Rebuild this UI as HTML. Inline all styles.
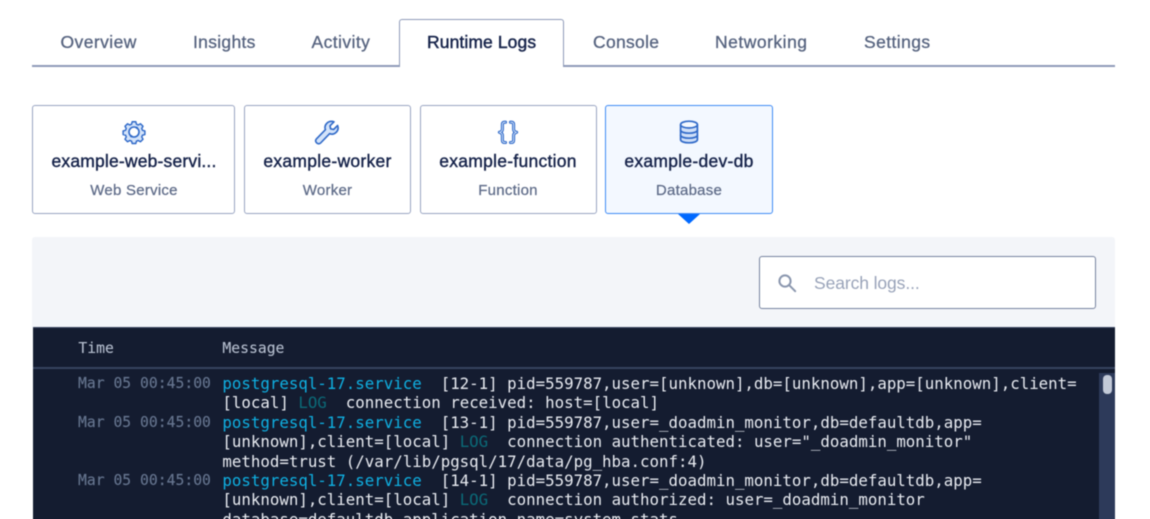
<!DOCTYPE html>
<html lang="en">
<head>
<meta charset="utf-8">
<title>Runtime Logs</title>
<style>
html,body{margin:0;padding:0;background:#fff;width:1150px;height:519px;overflow:hidden;}
body{position:relative;font-family:"Liberation Sans",sans-serif;}
#c{position:absolute;left:0;top:0;width:1150px;height:519px;overflow:hidden;contain:paint;}
#w{position:absolute;left:0;top:0;width:1150px;height:540px;overflow:hidden;filter:blur(.45px);}
.a{position:absolute;white-space:pre;}
.tab{top:31px;font-size:17.5px;line-height:22px;color:#56637f;letter-spacing:.42px;-webkit-text-stroke:.3px #56637f;}
.card{position:absolute;top:105px;height:107px;border:1.4px solid #99a5c2;border-radius:3px;background:#fff;box-sizing:content-box;}
.nm{top:150px;font-size:17.5px;line-height:22px;color:#16234a;letter-spacing:.27px;-webkit-text-stroke:.4px #16234a;transform:translateX(-50%);}
.ty{top:182px;font-size:15px;line-height:18px;color:#5f6c89;letter-spacing:.25px;-webkit-text-stroke:.25px #5f6c89;transform:translateX(-50%);}
.m{font-family:"DejaVu Sans Mono","Liberation Mono",monospace;}
.t{font-size:14.73px;line-height:19px;color:#66758f;left:78px;-webkit-text-stroke:.15px #66758f;}
.l{font-size:15.78px;line-height:19px;color:#e8ebf1;left:222.4px;}
.s{color:#0fb0e2;}
.g{color:#0b6a78;}
svg{position:absolute;overflow:visible;}
</style>
</head>
<body>
<div id="c">
<div id="w">
  <div class="a" style="left:32px;top:65px;width:1083px;height:1.6px;background:#8e9ab8;"></div>
  <div class="a" style="left:399px;top:19px;width:163px;height:47px;border:1.5px solid #8e9ab8;border-bottom:none;border-radius:3px 3px 0 0;background:#fff;"></div>

  <div class="a tab" style="left:60.5px;">Overview</div>
  <div class="a tab" style="left:193px;letter-spacing:.3px;">Insights</div>
  <div class="a tab" style="left:311.5px;">Activity</div>
  <div class="a tab" style="left:427px;color:#16234a;letter-spacing:.1px;-webkit-text-stroke:.45px #16234a;">Runtime Logs</div>
  <div class="a tab" style="left:593px;letter-spacing:.3px;">Console</div>
  <div class="a tab" style="left:715px;letter-spacing:.5px;">Networking</div>
  <div class="a tab" style="left:864px;">Settings</div>

  <div class="card" style="left:32px;width:201px;"></div>
  <div class="card" style="left:244px;width:165px;"></div>
  <div class="card" style="left:420px;width:174.5px;"></div>
  <div class="card" style="left:605px;width:166px;border-color:#3f8bf5;background:#f3f8ff;border-width:1.6px;"></div>
  <div class="a" style="left:678px;top:214px;width:0;height:0;border-left:11px solid transparent;border-right:11px solid transparent;border-top:10.5px solid #0069ff;"></div>

  <!-- gear -->
  <svg style="left:122px;top:120px;" width="24" height="24" viewBox="0 0 24 24" fill="#d3e3fa" stroke="#2f69c8" stroke-width="1.6" stroke-linejoin="round">
    <path d="M10 1.3h4l.7 2.7 2 .9 2.5-1.4 2.8 2.8-1.4 2.5.8 2 2.7.7v4l-2.7.7-.8 2 1.4 2.5-2.8 2.8-2.5-1.4-2 .8-.7 2.6h-4l-.7-2.6-2-.8-2.5 1.4-2.8-2.8 1.4-2.5-.8-2-2.7-.7v-4l2.7-.7.8-2-1.4-2.5 2.8-2.8 2.5 1.4 2-.9z" transform="translate(12 12) scale(.9) translate(-12 -12.7)"/>
    <circle cx="12" cy="12" r="5" fill="#fff"/>
    <circle cx="14.8" cy="7.8" r="1.2" fill="#2f69c8" stroke="none"/>
    <circle cx="9.2" cy="16.2" r="1.2" fill="#2f69c8" stroke="none"/>
  </svg>
  <!-- wrench -->
  <svg style="left:315px;top:120px;" width="25" height="25" viewBox="0 0 25 25" fill="#d3e3fa" stroke="#2f69c8" stroke-width="1.6" stroke-linejoin="round">
    <path d="M16.5 1.3c1 0 1.8.2 2.5.5l-4 4 .6 3 3 .7 4-4c.9 2.3.4 5-1.4 6.8-1.8 1.8-4.3 2.2-6.5 1.3L5.6 23a2.6 2.6 0 0 1-3.8 0l-.4-.4a2.6 2.6 0 0 1 0-3.7l9-9.2c-.8-2.2-.4-4.6 1.4-6.4 1.2-1.3 2.9-2 4.7-2z"/>
  </svg>
  <!-- braces -->
  <svg style="left:496px;top:120px;" width="24" height="25" viewBox="0 0 24 25" fill="none" stroke-linecap="round" stroke-linejoin="round">
    <path d="M9.5 2.2H8.6C7 2.2 6.4 3.2 6.4 4.6v4.6c0 1.5-.9 2.6-3 3.1 2.1.6 3 1.7 3 3.2v4.6c0 1.4.6 2.4 2.2 2.4h.9" stroke="#2f69c8" stroke-width="3.1"/>
    <path d="M9.5 2.2H8.6C7 2.2 6.4 3.2 6.4 4.6v4.6c0 1.5-.9 2.6-3 3.1 2.1.6 3 1.7 3 3.2v4.6c0 1.4.6 2.4 2.2 2.4h.9" stroke="#d3e3fa" stroke-width="1"/>
    <path d="M14.5 2.2h.9c1.6 0 2.2 1 2.2 2.4v4.6c0 1.5.9 2.6 3 3.1-2.1.6-3 1.7-3 3.2v4.6c0 1.4-.6 2.4-2.2 2.4h-.9" stroke="#2f69c8" stroke-width="3.1"/>
    <path d="M14.5 2.2h.9c1.6 0 2.2 1 2.2 2.4v4.6c0 1.5.9 2.6 3 3.1-2.1.6-3 1.7-3 3.2v4.6c0 1.4-.6 2.4-2.2 2.4h-.9" stroke="#d3e3fa" stroke-width="1"/>
  </svg>
  <!-- database -->
  <svg style="left:679px;top:120px;" width="20" height="24" viewBox="0 0 20 24" fill="#cfdff8" stroke="#2f69c8" stroke-width="1.7">
    <path d="M1.6 4.6v15c0 1.9 3.7 3.2 8.4 3.2s8.4-1.3 8.4-3.2v-15"/>
    <ellipse cx="10" cy="4.6" rx="8.4" ry="3.4" fill="#f3f8ff"/>
    <path d="M1.6 10c0 1.9 3.7 3.2 8.4 3.2s8.4-1.3 8.4-3.2M1.6 15c0 1.9 3.7 3.2 8.4 3.2s8.4-1.3 8.4-3.2" fill="none"/>
  </svg>

  <div class="a nm" style="left:134px;letter-spacing:.18px;">example-web-servi...</div>
  <div class="a nm" style="left:327.5px;">example-worker</div>
  <div class="a nm" style="left:508px;">example-function</div>
  <div class="a nm" style="left:689px;">example-dev-db</div>
  <div class="a ty" style="left:134px;">Web Service</div>
  <div class="a ty" style="left:327.5px;">Worker</div>
  <div class="a ty" style="left:508px;">Function</div>
  <div class="a ty" style="left:689px;">Database</div>

  <!-- panel -->
  <div class="a" style="left:32px;top:237px;width:1083px;height:91px;background:#f3f5f9;border-radius:3px 3px 0 0;"></div>
  <div class="a" style="left:759px;top:255.5px;width:335px;height:51px;background:#fff;border:1.5px solid #76839f;border-radius:3px;"></div>
  <svg style="left:777px;top:273px;" width="20" height="20" viewBox="0 0 20 20" fill="none" stroke="#8a96ae" stroke-width="2">
    <circle cx="8" cy="8" r="5.6"/><path d="M12.2 12.2l6 6" stroke-linecap="round"/>
  </svg>
  <div class="a" style="left:814px;top:272px;font-size:17.5px;line-height:22px;color:#99a3b9;letter-spacing:-.1px;">Search logs...</div>

  <!-- log -->
  <div class="a" style="left:33px;top:327px;width:1082px;height:213px;background:#141c30;"></div>
  <div class="a" style="left:33px;top:327px;width:1082px;height:1px;background:#3a4560;"></div>
  <div class="a" style="left:33px;top:367px;width:1082px;height:1.5px;background:#36435f;"></div>
  <div class="a m" style="left:78.4px;top:339px;font-size:14.73px;line-height:19px;color:#b6bfcf;-webkit-text-stroke:.1px #b6bfcf;">Time</div>
  <div class="a m" style="left:222.4px;top:339px;font-size:14.73px;line-height:19px;color:#b6bfcf;-webkit-text-stroke:.1px #b6bfcf;">Message</div>

  <div class="a m t" style="top:373.5px;">Mar 05 00:45:00</div>
  <div class="a m t" style="top:412.5px;">Mar 05 00:45:00</div>
  <div class="a m t" style="top:470.5px;">Mar 05 00:45:00</div>

  <div class="a m l" style="top:373.5px;"><span class="s">postgresql-17.service</span>  [12-1] pid=559787,user=[unknown],db=[unknown],app=[unknown],client=</div>
  <div class="a m l" style="top:393px;">[local] <span class="g">LOG</span>  connection received: host=[local]</div>
  <div class="a m l" style="top:412.5px;"><span class="s">postgresql-17.service</span>  [13-1] pid=559787,user=_doadmin_monitor,db=defaultdb,app=</div>
  <div class="a m l" style="top:432px;">[unknown],client=[local] <span class="g">LOG</span>  connection authenticated: user="_doadmin_monitor"</div>
  <div class="a m l" style="top:451.5px;">method=trust (/var/lib/pgsql/17/data/pg_hba.conf:4)</div>
  <div class="a m l" style="top:470.5px;"><span class="s">postgresql-17.service</span>  [14-1] pid=559787,user=_doadmin_monitor,db=defaultdb,app=</div>
  <div class="a m l" style="top:490px;">[unknown],client=[local] <span class="g">LOG</span>  connection authorized: user=_doadmin_monitor</div>
  <div class="a m l" style="top:509.5px;">database=defaultdb application_name=system_stats</div>

  <div class="a" style="left:1099px;top:373px;width:16px;height:167px;background:#2d3a5a;"></div>
  <div class="a" style="left:1103px;top:375px;width:8.5px;height:19px;background:#c3cad8;border-radius:4px;"></div>
</div>
</div>
</body>
</html>
